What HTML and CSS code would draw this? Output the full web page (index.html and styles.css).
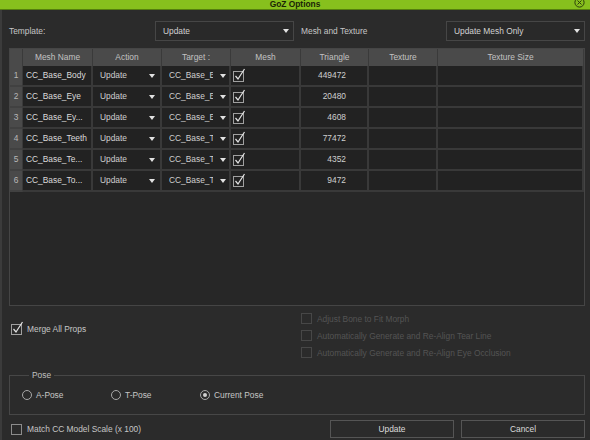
FILE: index.html
```html
<!DOCTYPE html>
<html lang="en">
<head>
    <meta charset="UTF-8">
    <title>GoZ Options</title>
    <link rel="stylesheet" href="styles.css">
</head>
<body>
    <div class="window">
        <div class="titlebar">
            <span></span>
            <span class="title">GoZ Options</span>
            <svg class="close" width="11" height="11" viewBox="0 0 11 11">
                <circle cx="5.5" cy="5.5" r="4.6" fill="none" stroke="#2c3d0c" stroke-width="1"/>
                <path d="M3.5 3.5 L7.5 7.5 M7.5 3.5 L3.5 7.5" stroke="#2c3d0c" stroke-width="1"/>
            </svg>
        </div>

        <div class="content">
            <div class="top">
                <span class="label-template">Template:</span>
                <div class="select"><span>Update</span><span class="caret"></span></div>
                <span class="label-mesh">Mesh and Texture</span>
                <div class="select"><span>Update Mesh Only</span><span class="caret"></span></div>
            </div>

            <div class="table">
                <div class="row head">
                    <div class="cell"></div>
                    <div class="cell">Mesh Name</div>
                    <div class="cell">Action</div>
                    <div class="cell">Target :</div>
                    <div class="cell">Mesh</div>
                    <div class="cell">Triangle</div>
                    <div class="cell">Texture</div>
                    <div class="cell">Texture Size</div>
                </div>

                <div class="row body">
                    <div class="cell num">1</div>
                    <div class="cell name">CC_Base_Body</div>
                    <div class="cell action"><span>Update</span><span class="caret"></span></div>
                    <div class="cell target"><span class="clip">CC_Base_Body</span><span class="caret"></span></div>
                    <div class="cell mesh"><svg class="tick" width="12" height="12" viewBox="0 0 12 12"><rect x="0.5" y="1.5" width="10" height="10" fill="none" stroke="#a0a0a0"/><path d="M2.5 6 L5 9 L11.5 -1" fill="none" stroke="#e4e4e4" stroke-width="1.2"/></svg></div>
                    <div class="cell tri">449472</div>
                    <div class="cell"></div>
                    <div class="cell"></div>
                </div>
                <div class="row body">
                    <div class="cell num">2</div>
                    <div class="cell name">CC_Base_Eye</div>
                    <div class="cell action"><span>Update</span><span class="caret"></span></div>
                    <div class="cell target"><span class="clip">CC_Base_Eye</span><span class="caret"></span></div>
                    <div class="cell mesh"><svg class="tick" width="12" height="12" viewBox="0 0 12 12"><rect x="0.5" y="1.5" width="10" height="10" fill="none" stroke="#a0a0a0"/><path d="M2.5 6 L5 9 L11.5 -1" fill="none" stroke="#e4e4e4" stroke-width="1.2"/></svg></div>
                    <div class="cell tri">20480</div>
                    <div class="cell"></div>
                    <div class="cell"></div>
                </div>
                <div class="row body">
                    <div class="cell num">3</div>
                    <div class="cell name">CC_Base_Ey...</div>
                    <div class="cell action"><span>Update</span><span class="caret"></span></div>
                    <div class="cell target"><span class="clip">CC_Base_EyeOcclusion</span><span class="caret"></span></div>
                    <div class="cell mesh"><svg class="tick" width="12" height="12" viewBox="0 0 12 12"><rect x="0.5" y="1.5" width="10" height="10" fill="none" stroke="#a0a0a0"/><path d="M2.5 6 L5 9 L11.5 -1" fill="none" stroke="#e4e4e4" stroke-width="1.2"/></svg></div>
                    <div class="cell tri">4608</div>
                    <div class="cell"></div>
                    <div class="cell"></div>
                </div>
                <div class="row body">
                    <div class="cell num">4</div>
                    <div class="cell name">CC_Base_Teeth</div>
                    <div class="cell action"><span>Update</span><span class="caret"></span></div>
                    <div class="cell target"><span class="clip">CC_Base_Teeth</span><span class="caret"></span></div>
                    <div class="cell mesh"><svg class="tick" width="12" height="12" viewBox="0 0 12 12"><rect x="0.5" y="1.5" width="10" height="10" fill="none" stroke="#a0a0a0"/><path d="M2.5 6 L5 9 L11.5 -1" fill="none" stroke="#e4e4e4" stroke-width="1.2"/></svg></div>
                    <div class="cell tri">77472</div>
                    <div class="cell"></div>
                    <div class="cell"></div>
                </div>
                <div class="row body">
                    <div class="cell num">5</div>
                    <div class="cell name">CC_Base_Te...</div>
                    <div class="cell action"><span>Update</span><span class="caret"></span></div>
                    <div class="cell target"><span class="clip">CC_Base_TearLine</span><span class="caret"></span></div>
                    <div class="cell mesh"><svg class="tick" width="12" height="12" viewBox="0 0 12 12"><rect x="0.5" y="1.5" width="10" height="10" fill="none" stroke="#a0a0a0"/><path d="M2.5 6 L5 9 L11.5 -1" fill="none" stroke="#e4e4e4" stroke-width="1.2"/></svg></div>
                    <div class="cell tri">4352</div>
                    <div class="cell"></div>
                    <div class="cell"></div>
                </div>
                <div class="row body">
                    <div class="cell num">6</div>
                    <div class="cell name">CC_Base_To...</div>
                    <div class="cell action"><span>Update</span><span class="caret"></span></div>
                    <div class="cell target"><span class="clip">CC_Base_Tongue</span><span class="caret"></span></div>
                    <div class="cell mesh"><svg class="tick" width="12" height="12" viewBox="0 0 12 12"><rect x="0.5" y="1.5" width="10" height="10" fill="none" stroke="#a0a0a0"/><path d="M2.5 6 L5 9 L11.5 -1" fill="none" stroke="#e4e4e4" stroke-width="1.2"/></svg></div>
                    <div class="cell tri">9472</div>
                    <div class="cell"></div>
                    <div class="cell"></div>
                </div>
            </div>

            <div class="options">
                <div class="left">
                    <div class="check-row merge">
                        <svg class="tick" width="12" height="12" viewBox="0 0 12 12"><rect x="0.5" y="1.5" width="10" height="10" fill="none" stroke="#a0a0a0"/><path d="M2.5 6 L5 9 L11.5 -1" fill="none" stroke="#e4e4e4" stroke-width="1.2"/></svg>
                        <span>Merge All Props</span>
                    </div>
                </div>
                <div class="right">
                    <div class="check-row disabled"><span class="box"></span><span>Adjust Bone to Fit Morph</span></div>
                    <div class="check-row disabled"><span class="box"></span><span>Automatically Generate and Re-Align Tear Line</span></div>
                    <div class="check-row disabled"><span class="box"></span><span>Automatically Generate and Re-Align Eye Occlusion</span></div>
                </div>
            </div>

            <fieldset class="pose">
                <legend>Pose</legend>
                <div class="radios">
                    <div class="radio"><span class="dot"></span><span>A-Pose</span></div>
                    <div class="radio"><span class="dot"></span><span>T-Pose</span></div>
                    <div class="radio"><span class="dot on"></span><span>Current Pose</span></div>
                </div>
            </fieldset>

            <div class="bottom">
                <div class="check-row scale"><span class="box"></span><span>Match CC Model Scale (x 100)</span></div>
                <div class="buttons">
                    <button class="btn">Update</button>
                    <button class="btn">Cancel</button>
                </div>
            </div>
        </div>
    </div>
</body>
</html>
```

FILE: styles.css
```css
* {
    box-sizing: border-box;
}

body {
    margin: 0;
    background: #2b2b2b;
    font-family: "Liberation Sans", Arial, sans-serif;
    font-size: 8.4px;
    color: #c6c6c6;
}

.window {
    width: 590px;
    height: 440px;
    overflow: hidden;
}

.titlebar {
    height: 10px;
    background: #87c01d;
    border-bottom: 1px solid #557f0e;
    display: grid;
    grid-template-columns: 1fr auto 1fr;
    line-height: 9px;
}

.title {
    font-weight: bold;
    color: #1a2406;
}

.close {
    justify-self: end;
    margin-right: 5px;
    margin-top: -3px;
}

.content {
    height: 430px;
    padding: 11px 5px 0 7px;
    border-left: 2px solid #3b3b3b;
}

/* top selectors */
.top {
    display: flex;
    align-items: center;
    height: 20px;
}

.label-template {
    width: 146px;
}

.label-mesh {
    width: 145px;
    margin-left: 7px;
}

.select {
    width: 139px;
    height: 20px;
    border: 1px solid #464646;
    background: #292929;
    display: flex;
    align-items: center;
    justify-content: space-between;
    padding: 0 4px 0 7px;
    color: #d2d2d2;
}

.caret {
    width: 0;
    height: 0;
    border-left: 3.5px solid transparent;
    border-right: 3.5px solid transparent;
    border-top: 4px solid #e2e2e2;
    flex: none;
}

/* mesh table */
.table {
    margin-top: 7px;
    height: 258px;
    border: 1px solid #454545;
    background: #272727;
}

.row {
    display: grid;
    grid-template-columns: 13px 70px 69px 69px 70px 68px 69px 146px;
}

.head .cell {
    height: 17px;
    line-height: 17px;
    background: #4a4a4a;
    border-right: 1px solid #3a3a3a;
    text-align: center;
    color: #c2c2c2;
}

.body .cell {
    height: 21px;
    line-height: 19px;
    background: #222222;
    border-right: 2px solid #393939;
    border-bottom: 2px solid #393939;
    color: #cfcfcf;
    white-space: nowrap;
    overflow: hidden;
}

.body .num {
    background: #4a4a4a;
    border-right: 1px solid #3a3a3a;
    border-bottom-color: #414141;
    text-align: center;
    color: #b8b8b8;
}

.body .name {
    padding-left: 3px;
    color: #dadada;
}

.body .action {
    display: flex;
    align-items: center;
    justify-content: space-between;
    padding: 0 5px 0 7px;
}

.body .target {
    display: flex;
    align-items: center;
    justify-content: space-between;
    padding: 0 3px 0 7px;
}

.clip {
    width: 44px;
    overflow: hidden;
}

.body .mesh {
    display: flex;
    align-items: center;
    padding-left: 2px;
    overflow: visible;
}

.tick {
    overflow: visible;
    flex: none;
}

.body .tri {
    text-align: right;
    padding-right: 21px;
}

/* options */
.options {
    display: flex;
    height: 51px;
    margin-top: 4px;
}

.left {
    width: 292px;
    padding-top: 10px;
}

.check-row {
    display: flex;
    align-items: center;
    height: 17px;
    gap: 5px;
}

.merge {
    margin-left: 2px;
    gap: 4px;
}

.box {
    width: 11px;
    height: 11px;
    border: 1px solid #8c8c8c;
    flex: none;
}

.disabled {
    color: #545454;
}

.disabled .box {
    border-color: #474747;
}

/* pose group */
.pose {
    margin: 9px 0 0;
    padding: 5px 12px 9px;
    border: 1px solid #474747;
}

.pose legend {
    margin-left: 7px;
    padding: 0 3px;
    line-height: 10px;
    color: #c0c0c0;
}

.radios {
    display: flex;
    height: 20px;
    align-items: center;
}

.radio {
    width: 89px;
    display: flex;
    align-items: center;
    gap: 4px;
}

.dot {
    width: 10px;
    height: 10px;
    border: 1px solid #a8a8a8;
    border-radius: 50%;
    display: flex;
    align-items: center;
    justify-content: center;
}

.dot.on::after {
    content: "";
    width: 4px;
    height: 4px;
    border-radius: 50%;
    background: #d0d0d0;
}

/* bottom bar */
.bottom {
    display: flex;
    align-items: center;
    height: 18px;
    margin-top: 5px;
}

.scale {
    margin-left: 2px;
}

.buttons {
    margin-left: auto;
    display: flex;
    gap: 7px;
}

.btn {
    width: 124px;
    height: 18px;
    border: 1px solid #555555;
    background: #2b2b2b;
    color: #dcdcdc;
    font-family: inherit;
    font-size: 8.4px;
    padding: 0;
}
```
